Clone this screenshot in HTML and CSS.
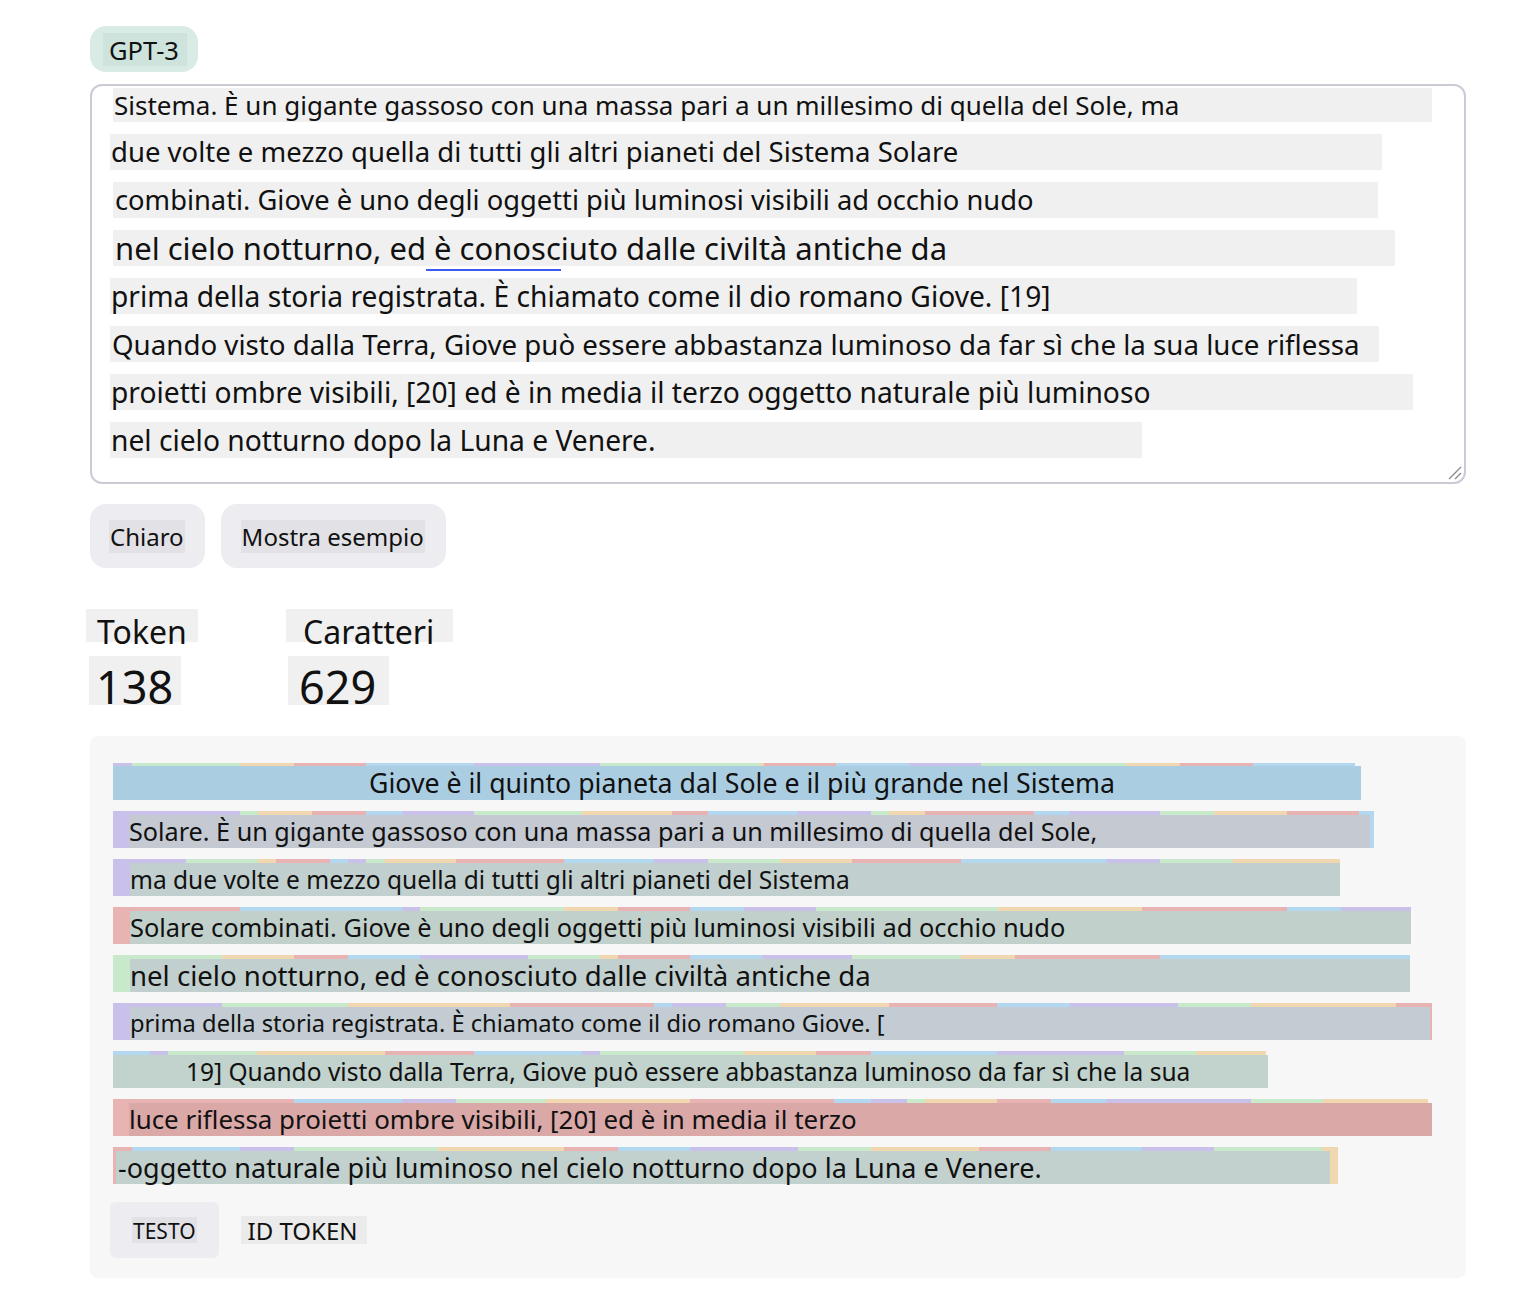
FILE: index.html
```html
<!DOCTYPE html>
<html lang="it">
<head>
<meta charset="utf-8">
<title>Tokenizer</title>
<link rel="stylesheet" href="styles.css">
</head>
<body>
<main class="page">
  <div class="model"><span class="hl">GPT-3</span></div>

  <div class="editor">
    <div class="line l1 fs26" style="width:1319px">Sistema. È un gigante gassoso con una massa pari a un millesimo di quella del Sole, ma</div>
    <div class="line fs27" style="width:1272px">due volte e mezzo quella di tutti gli altri pianeti del Sistema Solare</div>
    <div class="line shift fs27b" style="width:1265px">combinati. Giove è uno degli oggetti più luminosi visibili ad occhio nudo</div>
    <div class="line shift fs31" style="width:1282px">nel cielo notturno, ed<span class="spell"> è conosc</span>iuto dalle civiltà antiche da</div>
    <div class="line fs28" style="width:1247px">prima della storia registrata. È chiamato come il dio romano Giove. [19]</div>
    <div class="line fs28b tight" style="width:1269px">Quando visto dalla Terra, Giove può essere abbastanza luminoso da far sì che la sua luce riflessa</div>
    <div class="line fs28" style="width:1303px">proietti ombre visibili, [20] ed è in media il terzo oggetto naturale più luminoso</div>
    <div class="line fs28" style="width:1032px">nel cielo notturno dopo la Luna e Venere.</div>
    <svg class="grip" width="16" height="16" viewBox="0 0 16 16" aria-hidden="true">
      <path d="M15 3 L3 15 M15 9 L9 15" stroke="#8a8a8a" stroke-width="1.3" fill="none"/>
    </svg>
  </div>

  <div class="actions">
    <button class="btn clear"><span class="hl">Chiaro</span></button>
    <button class="btn sample"><span class="hl">Mostra esempio</span></button>
  </div>

  <div class="stats">
    <div class="stat">
      <div class="label">Token</div>
      <div class="value">138</div>
    </div>
    <div class="stat second">
      <div class="label">Caratteri</div>
      <div class="value">629</div>
    </div>
  </div>

  <section class="output">
    <div class="row">
      <div class="tokens"><i class="t p" style="width:19px"></i><i class="t g" style="width:108px"></i><i class="t o" style="width:54px"></i><i class="t r" style="width:72px"></i><i class="t b" style="width:108px"></i><i class="t p" style="width:126px"></i><i class="t g" style="width:160px"></i><i class="t o" style="width:4px"></i><i class="t r" style="width:72px"></i><i class="t b" style="width:73px"></i><i class="t p" style="width:72px"></i><i class="t g" style="width:145px"></i><i class="t o" style="width:54px"></i><i class="t r" style="width:73px"></i><i class="t b" style="width:102px"></i></div>
      <div class="bar first o1" style="margin-left:0;width:1248px;background:#aacde2;padding-left:256px">Giove è il quinto pianeta dal Sole e il più grande nel Sistema</div>
    </div>
    <div class="row">
      <div class="tokens"><i class="t p" style="width:127px"></i><i class="t g" style="width:18px"></i><i class="t o" style="width:54px"></i><i class="t r" style="width:54px"></i><i class="t b" style="width:36px"></i><i class="t p" style="width:72px"></i><i class="t g" style="width:108px"></i><i class="t o" style="width:90px"></i><i class="t r" style="width:36px"></i><i class="t b" style="width:90px"></i><i class="t p" style="width:73px"></i><i class="t g" style="width:18px"></i><i class="t o" style="width:36px"></i><i class="t r" style="width:109px"></i><i class="t b" style="width:36px"></i><i class="t p" style="width:90px"></i><i class="t g" style="width:54px"></i><i class="t o" style="width:73px"></i><i class="t r" style="width:72px"></i><i class="t b" style="width:15px"></i></div>
      <div class="bar o2" style="margin-left:16px;width:1241px;background:#c5c9d2">Solare. È un gigante gassoso con una massa pari a un millesimo di quella del Sole,</div>
    </div>
    <div class="row">
      <div class="tokens"><i class="t p" style="width:73px"></i><i class="t g" style="width:72px"></i><i class="t o" style="width:18px"></i><i class="t r" style="width:54px"></i><i class="t b" style="width:18px"></i><i class="t p" style="width:18px"></i><i class="t g" style="width:19px"></i><i class="t o" style="width:71px"></i><i class="t r" style="width:108px"></i><i class="t b" style="width:90px"></i><i class="t p" style="width:54px"></i><i class="t g" style="width:72px"></i><i class="t o" style="width:72px"></i><i class="t r" style="width:109px"></i><i class="t b" style="width:145px"></i><i class="t p" style="width:54px"></i><i class="t g" style="width:73px"></i><i class="t o" style="width:107px"></i></div>
      <div class="bar o3" style="margin-left:17px;width:1210px;background:#c1cfce">ma due volte e mezzo quella di tutti gli altri pianeti del Sistema</div>
    </div>
    <div class="row">
      <div class="tokens"><i class="t r" style="width:127px"></i><i class="t b" style="width:162px"></i><i class="t p" style="width:18px"></i><i class="t g" style="width:144px"></i><i class="t o" style="width:54px"></i><i class="t r" style="width:72px"></i><i class="t b" style="width:54px"></i><i class="t p" style="width:72px"></i><i class="t g" style="width:182px"></i><i class="t o" style="width:144px"></i><i class="t r" style="width:145px"></i><i class="t b" style="width:54px"></i><i class="t p" style="width:70px"></i></div>
      <div class="bar o4" style="margin-left:17px;width:1281px;background:#c1d0cb">Solare combinati. Giove è uno degli oggetti più luminosi visibili ad occhio nudo</div>
    </div>
    <div class="row">
      <div class="tokens"><i class="t g" style="width:109px"></i><i class="t o" style="width:72px"></i><i class="t r" style="width:54px"></i><i class="t b" style="width:72px"></i><i class="t p" style="width:108px"></i><i class="t g" style="width:72px"></i><i class="t o" style="width:18px"></i><i class="t r" style="width:72px"></i><i class="t b" style="width:72px"></i><i class="t p" style="width:90px"></i><i class="t g" style="width:109px"></i><i class="t o" style="width:54px"></i><i class="t r" style="width:145px"></i><i class="t b" style="width:250px"></i></div>
      <div class="bar o5" style="margin-left:17px;width:1280px;background:#c1cfce">nel cielo notturno, ed è conosciuto dalle civiltà antiche da</div>
    </div>
    <div class="row">
      <div class="tokens"><i class="t p" style="width:109px"></i><i class="t g" style="width:126px"></i><i class="t o" style="width:162px"></i><i class="t r" style="width:144px"></i><i class="t b" style="width:18px"></i><i class="t p" style="width:54px"></i><i class="t g" style="width:54px"></i><i class="t o" style="width:109px"></i><i class="t r" style="width:108px"></i><i class="t b" style="width:73px"></i><i class="t p" style="width:108px"></i><i class="t g" style="width:73px"></i><i class="t o" style="width:145px"></i><i class="t r" style="width:36px"></i></div>
      <div class="bar o6" style="margin-left:17px;width:1300px;background:#c2ccd2">prima della storia registrata. È chiamato come il dio romano Giove. [</div>
    </div>
    <div class="row">
      <div class="tokens"><i class="t b" style="width:37px"></i><i class="t p" style="width:18px"></i><i class="t g" style="width:89px"></i><i class="t o" style="width:128px"></i><i class="t r" style="width:89px"></i><i class="t b" style="width:108px"></i><i class="t p" style="width:18px"></i><i class="t g" style="width:144px"></i><i class="t o" style="width:72px"></i><i class="t r" style="width:55px"></i><i class="t b" style="width:126px"></i><i class="t p" style="width:127px"></i><i class="t g" style="width:72px"></i><i class="t o" style="width:70px"></i></div>
      <div class="bar o7" style="margin-left:0;width:1155px;background:#c2d2cc;padding-left:73px">19] Quando visto dalla Terra, Giove può essere abbastanza luminoso da far sì che la sua</div>
    </div>
    <div class="row">
      <div class="tokens"><i class="t r" style="width:181px"></i><i class="t b" style="width:108px"></i><i class="t p" style="width:54px"></i><i class="t g" style="width:90px"></i><i class="t o" style="width:144px"></i><i class="t r" style="width:144px"></i><i class="t b" style="width:37px"></i><i class="t p" style="width:36px"></i><i class="t g" style="width:18px"></i><i class="t o" style="width:72px"></i><i class="t r" style="width:54px"></i><i class="t b" style="width:55px"></i><i class="t p" style="width:145px"></i><i class="t g" style="width:72px"></i><i class="t o" style="width:105px"></i></div>
      <div class="bar o8" style="margin-left:16px;width:1303px;background:#dba8a8">luce riflessa proietti ombre visibili, [20] ed è in media il terzo</div>
    </div>
    <div class="row">
      <div class="tokens"><i class="t r" style="width:19px"></i><i class="t b" style="width:108px"></i><i class="t p" style="width:54px"></i><i class="t g" style="width:144px"></i><i class="t o" style="width:126px"></i><i class="t r" style="width:54px"></i><i class="t b" style="width:72px"></i><i class="t p" style="width:108px"></i><i class="t g" style="width:73px"></i><i class="t o" style="width:108px"></i><i class="t r" style="width:72px"></i><i class="t b" style="width:91px"></i><i class="t p" style="width:72px"></i><i class="t g" style="width:108px"></i><i class="t o" style="width:16px"></i></div>
      <div class="bar o9" style="margin-left:3px;width:1214px;background:#c2d1cd;padding-left:2px">-oggetto naturale più luminoso nel cielo notturno dopo la Luna e Venere.</div>
    </div>

    <div class="tabs">
      <div class="tab active"><span class="hl">TESTO</span></div>
      <div class="tab"><span class="hl">ID TOKEN</span></div>
    </div>
  </section>
</main>
</body>
</html>
```

FILE: styles.css
```css
* {
  box-sizing: border-box;
}

body {
  margin: 0;
  background: #ffffff;
  color: #111111;
  font-family: "Noto Sans", "Open Sans", "DejaVu Sans", sans-serif;
}

.page {
  width: 1376px;
  margin-left: 90px;
  padding-top: 26px;
}

/* model pill */
.model {
  display: inline-flex;
  align-items: center;
  height: 46px;
  padding: 0 11px 0 13px;
  background: #d8ebe4;
  border-radius: 16px;
}

.model .hl {
  background: #cde3db;
  font-size: 25.5px;
  line-height: 31px;
  padding: 2px 8px 0 6px;
}

/* editor */
.editor {
  position: relative;
  margin-top: 12px;
  height: 400px;
  border: 2px solid #cbcbd6;
  border-radius: 12px;
  padding: 2px 0 0 18px;
  display: flex;
  flex-direction: column;
  gap: 12px;
}

.line {
  flex: none;
  height: 36px;
  line-height: 36px;
  background: #f0f0f0;
  font-size: 24px;
  white-space: nowrap;
  padding-left: 1px;
}

.line.l1 {
  margin-left: 3px;
  height: 34px;
  line-height: 34px;
}

.line.shift {
  margin-left: 3px;
  padding-left: 2px;
}

.line.tight {
  padding-left: 2px;
}

.fs26 { font-size: 26px; }
.fs27 { font-size: 27.5px; }
.fs27b { font-size: 27.3px; }
.fs28 { font-size: 28.2px; }
.fs28b { font-size: 27.7px; }
.fs31 { font-size: 31px; }

.spell {
  border-bottom: 2.5px solid #3a5cf0;
}

.grip {
  position: absolute;
  right: 2px;
  bottom: 2px;
}

/* buttons */
.actions {
  margin-top: 20px;
  display: flex;
  gap: 16px;
}

.btn {
  height: 64px;
  border: none;
  border-radius: 16px;
  background: #ececf1;
  font-family: inherit;
  color: #111111;
  font-size: 24px;
  padding: 0 20px 0 19px;
  display: flex;
  align-items: center;
}

.btn.sample {
  padding: 0 21px 0 20px;
}

.btn .hl {
  background: #e2e2e6;
  line-height: 32px;
  padding: 1px 1px 0;
}

/* stats */
.stats {
  margin-top: 41px;
  display: flex;
}

.stat {
  width: 200px;
  margin-left: -4px;
}

.stat.second {
  margin-left: 0;
}

.label {
  display: inline-block;
  height: 33px;
  line-height: 45px;
  font-size: 32px;
  background: #f0f0f0;
  padding: 0 11px 0 11px;
  vertical-align: top;
}

.second .label {
  padding: 0 19px 0 17px;
}

.value {
  display: block;
  width: max-content;
  margin-top: 14px;
  margin-left: 3px;
  height: 49px;
  line-height: 62px;
  font-size: 45px;
  background: #f0f0f0;
  padding: 0 8px 0 7px;
}

.second .value {
  margin-left: 2px;
  padding: 0 13px 0 11px;
}

/* output */
.output {
  margin-top: 31px;
  background: #f7f7f7;
  border-radius: 8px;
  padding: 27px 20px 20px 23px;
}

.row {
  display: grid;
  height: 37px;
  margin-bottom: 11px;
}

.tokens {
  grid-area: 1 / 1;
  display: flex;
}

.t {
  flex: none;
  display: block;
  height: 37px;
}

.t.p { background: #c9c1ea; }
.t.g { background: #c9e9cb; }
.t.o { background: #f0d7b0; }
.t.r { background: #e8b3b3; }
.t.b { background: #b3d7ef; }

.bar {
  grid-area: 1 / 1;
  align-self: start;
  margin-top: 4px;
  height: 33px;
  line-height: 33px;
  font-size: 24px;
  white-space: nowrap;
}

.bar.first {
  margin-top: 3px;
  height: 34px;
}

.o1 { font-size: 26.7px; }
.o2 { font-size: 25.2px; }
.o3 { font-size: 24.5px; }
.o4 { font-size: 25.4px; }
.o5 { font-size: 27.6px; }
.o6 { font-size: 23.7px; }
.o7 { font-size: 24.5px; }
.o8 { font-size: 25.9px; }
.o9 { font-size: 27px; }

/* tabs */
.tabs {
  margin-top: 18px;
  margin-left: -3px;
  display: flex;
  align-items: center;
}

.tab {
  height: 56px;
  padding: 0 22px;
  border-radius: 6px;
  display: flex;
  align-items: center;
  font-size: 24px;
}

.tab.active {
  background: #ececf1;
  font-size: 21px;
}

.tab .hl {
  background: #ebebeb;
  line-height: 26px;
  padding: 2px 9px 0 7px;
}

.tab.active .hl {
  background: #e2e2e6;
  line-height: 24px;
  padding: 2px 1px 0;
}
```
